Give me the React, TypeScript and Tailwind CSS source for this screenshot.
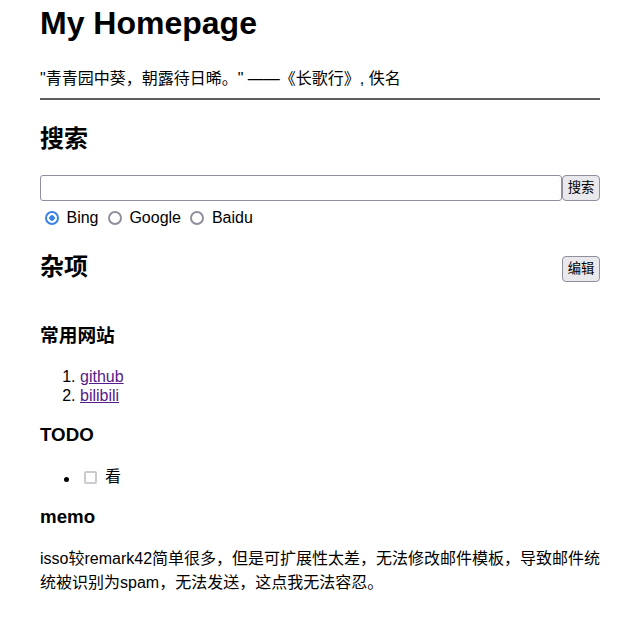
import { useState } from "react";

const FONT = "font-['Liberation_Sans','Noto_Sans_CJK_SC',sans-serif]";

const SITES = [
  ["github", "#github"],
  ["bilibili", "#bilibili"],
];

const ENGINES = [
  ["bing", "Bing"],
  ["google", "Google"],
  ["baidu", "Baidu"],
];

function Btn({ children }: { children: React.ReactNode }) {
  return (
    <button className="h-[26px] w-[38px] bg-[#e9e9ed] border border-[#8f8f9d] rounded-[4px] text-[13.33px] leading-none text-black">
      {children}
    </button>
  );
}

export default function App() {
  const [engine, setEngine] = useState("bing");

  return (
    <div className={`${FONT} text-black bg-white min-h-screen`}>
      <div className="w-[560px] ml-[40px]">
        {/* header */}
        <header className="border-b-2 border-[#5e5e5e] pb-[7px]">
          <h1 className="pt-[5px] text-[32px] leading-[37px] font-bold">My Homepage</h1>
          <p className="mt-[25px] text-[16px] leading-[24px]">
            "青青园中葵，朝露待日晞。" ——《长歌行》, 佚名
          </p>
        </header>

        {/* search */}
        <h2 className="mt-[25px] text-[24px] leading-[28px] font-bold">搜索</h2>
        <div className="mt-[22px] flex">
          <input
            type="text"
            className="flex-1 h-[26px] border border-[#8f8f9d] rounded-[3px] px-[2px] text-[13.33px]"
          />
          <Btn>搜索</Btn>
        </div>
        <div className="h-[24px] mt-[5px] text-[16px] leading-[24px] whitespace-nowrap">
          {ENGINES.map(([k, label]) => (
            <label key={k}>
              <input
                type="radio"
                name="engine"
                checked={engine === k}
                onChange={() => setEngine(k)}
                className="appearance-none align-[-2px] ml-[5px] mr-[3px] w-[14px] h-[14px] rounded-full border-2 border-[#8f8f9d] bg-white checked:border-[#3b82e6] checked:bg-[radial-gradient(circle,#3b82e6_0,#3b82e6_2.5px,#fff_3px)]"
              />{" "}
              {label}{" "}
            </label>
          ))}
        </div>

        {/* misc */}
        <div className="mt-[23px] flex justify-between items-start">
          <h2 className="text-[24px] leading-[28px] font-bold">杂项</h2>
          <div className="pt-[3px]">
            <Btn>编辑</Btn>
          </div>
        </div>

        <h3 className="mt-[42px] text-[18.72px] leading-[24px] font-bold">常用网站</h3>
        <ol className="mt-[19px] list-decimal pl-[40px] text-[16px] leading-[19px]">
          {SITES.map(([name, href]) => (
            <li key={name}>
              <a href={href} className="text-[#551a8b] underline">
                {name}
              </a>
            </li>
          ))}
        </ol>

        <h3 className="mt-[18px] text-[18.72px] leading-[24px] font-bold">TODO</h3>
        <ul className="mt-[18px] list-disc pl-[40px] text-[16px] leading-[24px]">
          <li>
            <label className="inline-flex items-center">
              <input
                type="checkbox"
                disabled
                className="appearance-none ml-[4px] mr-[8px] w-[13px] h-[13px] border-2 border-[#cacad0] rounded-[2px] bg-white"
              />
              看
            </label>
          </li>
        </ul>

        <h3 className="mt-[14px] text-[18.72px] leading-[24px] font-bold">memo</h3>
        <p className="mt-[18px] mr-[-6px] text-[16px] leading-[24px]">
          isso较remark42简单很多，但是可扩展性太差，无法修改邮件模板，导致邮件统统被识别为spam，无法发送，这点我无法容忍。
        </p>
      </div>
    </div>
  );
}
